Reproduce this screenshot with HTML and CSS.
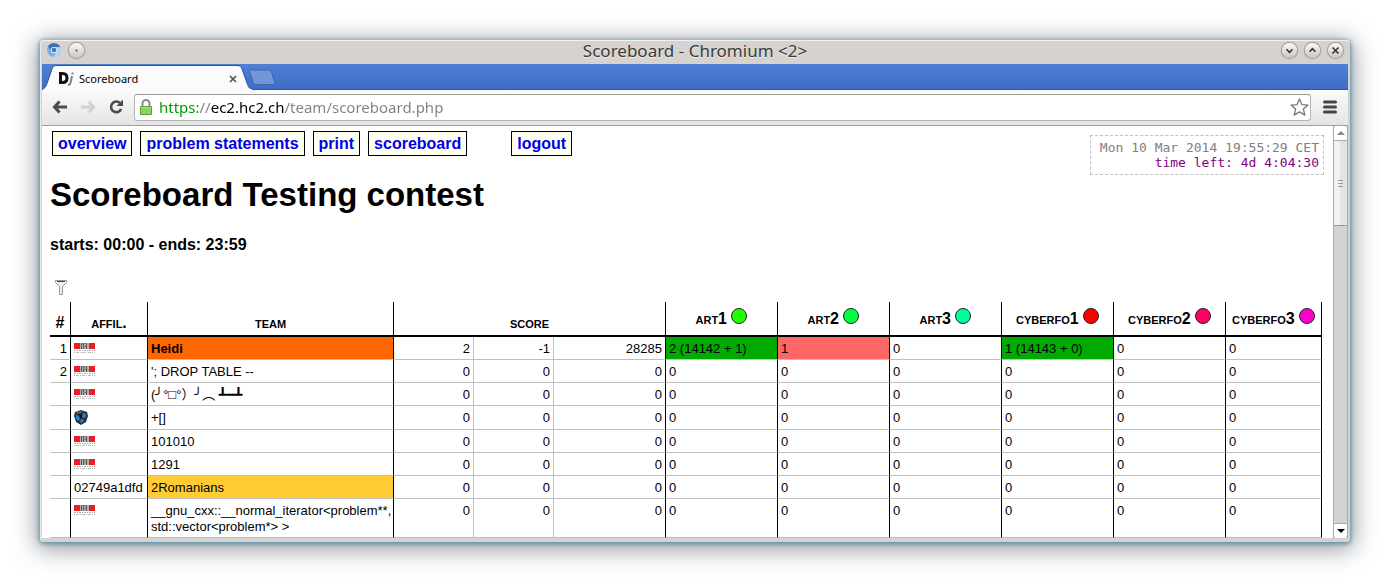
FILE: index.html
```html
<!DOCTYPE html>
<html lang="en">
<head>
<meta charset="utf-8">
<title>Scoreboard</title>
<link rel="stylesheet" href="styles.css">
</head>
<body>
<svg class="defs" width="0" height="0" aria-hidden="true">
  <symbol id="epfl" viewBox="0 0 21 11">
    <path fill="#ee1c25" d="M0 0h21v6H0z"/>
    <path fill="#b5aead" d="M6 0h9v6H6z"/>
    <path fill="none" stroke="#555" d="M7.500 0v6M9.500 0v6M12.500 1v5"/>
    <path fill="none" stroke="#777" d="M7 .5h6M9 3.500h3"/>
    <path fill="none" stroke="#aaa" stroke-dasharray="2 1 1 1" d="M0 7.500h21"/>
    <path fill="none" stroke="#bbb" stroke-dasharray="1 1 3 1" d="M0 9.500h21"/>
  </symbol>
  <symbol id="crest" viewBox="0 0 14 15">
    <path fill="#29323c" d="M1 2 7 0l6 2 1 4-2 6-5 3-5-3-2-6z"/>
    <path fill="#5c6c7a" d="M2 2.500 7 1l2 1-6 2z"/>
    <path fill="#2f7fc4" d="M2 5l3 1 1 3-2 2-2-2zM9 3l3 1-1 4-3-1zM7 9l3 1-2 3-2-1z"/>
    <path fill="#0b1016" d="M5 4l3 1v3L6 8z"/>
  </symbol>
</svg>
<div class="window">
  <header class="titlebar">
    <div class="controls start">
      <svg class="app-icon" width="14" height="14" viewBox="0 0 14 14"><circle cx="7" cy="7" r="7" fill="#7eaee0"/><path fill="#3f6faf" d="M1 3.500A7 7 0 0 1 13.200 4H7a3 3 0 0 0-3 3z"/><path fill="#b7d5f3" d="M13.400 4.200A7 7 0 0 1 6.500 14l3-5.200A3 3 0 0 0 9 4.200z"/><circle cx="7" cy="7" r="3.100" fill="#e8f1fa"/><circle cx="7" cy="7" r="2.300" fill="#3f78bd"/></svg>
      <button class="round" aria-label="Window menu"><svg width="15" height="15" viewBox="0 0 15 15"><circle cx="7.500" cy="7.500" r="1" fill="#444"/></svg></button>
    </div>
    <div class="title">Scoreboard - Chromium &lt;2&gt;</div>
    <div class="controls">
      <button class="round" aria-label="Minimize"><svg width="15" height="15" viewBox="0 0 15 15"><path d="M4.500 6.300l3 3 3-3"/></svg></button>
      <button class="round" aria-label="Maximize"><svg width="15" height="15" viewBox="0 0 15 15"><path d="M4.500 8.700l3-3 3 3"/></svg></button>
      <button class="round" aria-label="Close"><svg width="15" height="15" viewBox="0 0 15 15"><path d="M4.500 4.500l6 6M10.500 4.500l-6 6"/></svg></button>
    </div>
  </header>
  <div class="tabs">
    <div class="tab">
      <svg class="tab-shape" width="212" height="26" viewBox="0 0 212 26"><path fill="#fbfbfb" stroke="#2f529b" d="M0 25.500c3-1 4-3 5-6L10 5c1-3 2-3.500 5-3.500h180c3 0 4 1 5 3.500l5.500 15.500c1 3 2 4 5 5"/><path stroke="#fbfbfb" d="M1 25.500h209"/></svg>
      <svg class="favicon" width="17" height="16" viewBox="0 0 17 16"><path fill="none" stroke="#111" stroke-width="3" d="M2.500 2.500h2c3 0 4.500 1.500 4.500 4.500s-1.500 4.500-4.500 4.500h-2V2.500z"/><path fill="none" stroke="#6d8f8a" stroke-width="2" d="M14 5l-1.500 7c-.4 1.600-1.300 2-2.500 2M14.500 1.500v2"/></svg>
      <span class="tab-name">Scoreboard</span>
      <button class="tab-close" aria-label="Close tab"><svg width="8" height="8" viewBox="0 0 8 8"><path stroke="#555" stroke-width="1.700" d="M1 1l6 6M7 1L1 7"/></svg></button>
    </div>
    <button class="new-tab" aria-label="New tab"><svg width="28" height="17" viewBox="0 0 28 17"><path fill="#7396d8" stroke="#4365ae" d="M3 1h17c2 0 3 .5 3.500 2l3 10c.5 2 0 2.500-2 2.500H9c-2 0-3-.5-3.500-2L1.500 3C1 1.500 1.500 1 3 1z"/></svg></button>
  </div>
  <div class="toolbar">
    <button class="tool" aria-label="Back"><svg width="16" height="14" viewBox="0 0 16 14"><path fill="none" stroke="#4b4b4b" stroke-width="3" d="M7.500 1.500L2.500 7l5 5.500M3 7h12"/></svg></button>
    <button class="tool" aria-label="Forward"><svg width="16" height="14" viewBox="0 0 16 14"><path fill="none" stroke="#d2d2d2" stroke-width="3" d="M8.500 1.500l5 5.500-5 5.500M13 7H1"/></svg></button>
    <button class="tool reload" aria-label="Reload"><svg width="16" height="16" viewBox="0 0 16 16"><path fill="none" stroke="#4b4b4b" stroke-width="2.600" d="M12 4a5.300 5.300 0 1 0 1.200 6"/><path fill="#4b4b4b" d="M15 .5V7H8.500z"/></svg></button>
    <div class="omnibox">
      <svg width="12" height="16" viewBox="0 0 12 16"><path fill="none" stroke="#8b8b8b" stroke-width="2" d="M2.500 8V4.500a3.500 3.500 0 0 1 7 0V8"/><path fill="#8ed25f" stroke="#5c9a3a" d="M.5 7.500h11v8H.5z"/><path stroke="#b5e597" d="M1 8.500h10"/></svg>
      <input class="url" type="text" aria-label="Address" value="https://ec2.hc2.ch/team/scoreboard.php">
      <button class="star" aria-label="Bookmark"><svg width="19" height="18" viewBox="0 0 19 18"><path fill="#fff" stroke="#777" stroke-width="1.300" stroke-linejoin="round" d="M9.500 1l2.400 5.600 6.100.5-4.600 4 1.500 6-5.400-3.200-5.400 3.200 1.500-6-4.600-4 6.100-.5z"/></svg></button>
    </div>
    <button class="tool menu" aria-label="Menu"><svg width="14" height="14" viewBox="0 0 14 14"><path stroke="#454545" stroke-width="3" stroke-linecap="round" d="M1.500 2h11M1.500 7h11M1.500 12h11"/></svg></button>
  </div>
  <div class="viewport">
    <main class="page">
      <div class="top">
        <nav class="nav">
          <a href="#">overview</a>
          <a href="#">problem statements</a>
          <a href="#">print</a>
          <a href="#">scoreboard</a>
          <a href="#" class="logout">logout</a>
        </nav>
        <div class="clock">
          <div>Mon 10 Mar 2014 19:55:29 CET</div>
          <div class="left">time left: 4d 4:04:30</div>
        </div>
      </div>
      <h1>Scoreboard Testing contest</h1>
      <h4>starts: 00:00 - ends: 23:59</h4>
      <button class="filter" aria-label="Filter"><svg width="12" height="16" viewBox="0 0 12 16"><path fill="#eee" stroke="#999" d="M.5 1.500h11v2l-4 4v8h-3v-8l-4-4z"/><path stroke="#444" d="M2 2.500h8"/></svg></button>
      <table class="scoreboard">
        <colgroup><col class="c-rank"><col class="c-affil"><col><col class="c-num"><col class="c-num"><col class="c-prob"><col class="c-prob"><col class="c-prob"><col class="c-prob"><col class="c-prob"><col class="c-prob"><col class="c-last"></colgroup>
        <thead>
          <tr>
            <th>#</th><th>affil.</th><th>team</th><th colspan="3">score</th>
            <th class="prob">art1 <i class="ball lime"></i></th>
            <th class="prob">art2 <i class="ball green"></i></th>
            <th class="prob">art3 <i class="ball mint"></i></th>
            <th class="prob">cyberfo1 <i class="ball red"></i></th>
            <th class="prob">cyberfo2 <i class="ball rose"></i></th>
            <th class="prob">cyberfo3 <i class="ball magenta"></i></th>
          </tr>
        </thead>
        <tbody>
          <tr><td>1</td><td><svg class="logo"><use href="#epfl"/></svg></td><td class="self">Heidi</td><td>2</td><td>-1</td><td>28285</td><td class="ok">2 (14142 + 1)</td><td class="bad">1</td><td>0</td><td class="ok">1 (14143 + 0)</td><td>0</td><td>0</td></tr>
          <tr><td>2</td><td><svg class="logo"><use href="#epfl"/></svg></td><td>'; DROP TABLE --</td><td>0</td><td>0</td><td>0</td><td>0</td><td>0</td><td>0</td><td>0</td><td>0</td><td>0</td></tr>
          <tr><td></td><td><svg class="logo"><use href="#epfl"/></svg></td><td>(╯°□°）╯︵ ┻━┻</td><td>0</td><td>0</td><td>0</td><td>0</td><td>0</td><td>0</td><td>0</td><td>0</td><td>0</td></tr>
          <tr class="tall"><td></td><td><svg class="crest"><use href="#crest"/></svg></td><td>+[]</td><td>0</td><td>0</td><td>0</td><td>0</td><td>0</td><td>0</td><td>0</td><td>0</td><td>0</td></tr>
          <tr><td></td><td><svg class="logo"><use href="#epfl"/></svg></td><td>101010</td><td>0</td><td>0</td><td>0</td><td>0</td><td>0</td><td>0</td><td>0</td><td>0</td><td>0</td></tr>
          <tr><td></td><td><svg class="logo"><use href="#epfl"/></svg></td><td>1291</td><td>0</td><td>0</td><td>0</td><td>0</td><td>0</td><td>0</td><td>0</td><td>0</td><td>0</td></tr>
          <tr><td></td><td>02749a1dfd</td><td class="gold">2Romanians</td><td>0</td><td>0</td><td>0</td><td>0</td><td>0</td><td>0</td><td>0</td><td>0</td><td>0</td></tr>
          <tr><td></td><td><svg class="logo"><use href="#epfl"/></svg></td><td>__gnu_cxx::__normal_iterator&lt;problem**,<br>std::vector&lt;problem*&gt; &gt;</td><td>0</td><td>0</td><td>0</td><td>0</td><td>0</td><td>0</td><td>0</td><td>0</td><td>0</td></tr>
        </tbody>
      </table>
    </main>
    <div class="scrollbar">
      <button class="up" aria-label="Scroll up"><svg width="8" height="4" viewBox="0 0 8 4"><path fill="#888" d="M0 4l4-4 4 4z"/></svg></button>
      <div class="thumb"><span class="grip"></span></div>
      <button class="down" aria-label="Scroll down"><svg width="8" height="4" viewBox="0 0 8 4"><path fill="#000" d="M0 0h8L4 4z"/></svg></button>
    </div>
  </div>
</div>
</body>
</html>
```
FILE: styles.css
```css
* { box-sizing: border-box; }

body {
  margin: 0;
  padding: 40px;
  height: 100vh;
  background: #fff;
  font-family: "Liberation Sans", Arial, sans-serif;
  color: #000;
}

button {
  display: flex;
  align-items: center;
  justify-content: center;
  padding: 0;
  border: 0;
  background: none;
  flex: none;
}

svg { display: block; flex: none; }
.defs { position: absolute; }

.window {
  display: flex;
  flex-direction: column;
  height: 100%;
  padding: 0 2px 4px;
  background: #d6d2cf;
  border-radius: 4px;
  box-shadow: inset 0 1px 0 #f4f2f0, inset 1px 0 0 #eceae8, 0 1px 4px 1px #5b92aa, 0 4px 24px 3px rgba(60, 66, 80, 0.55);
}

/* Window frame */
.titlebar {
  display: flex;
  align-items: center;
  height: 24px;
  padding: 0 5px 3px;
  flex: none;
}

.title {
  flex: 1;
  text-align: center;
  font: 17px/20px "Noto Sans", sans-serif;
  color: #3b3937;
  text-shadow: 0 1px 0 #eee;
}

.controls { display: flex; gap: 8px; }
.controls.start { width: 61px; }

.round {
  width: 15px;
  height: 15px;
  border-radius: 50%;
  background: linear-gradient(#fbfbfa, #c9c5c1);
  box-shadow: 0 0 1px 1px #98938f;
}

.round path { fill: none; stroke: #333; stroke-width: 1.6; }

.tabs {
  display: flex;
  height: 26px;
  flex: none;
  background: linear-gradient(#4e80d5, #3f6cc6);
  box-shadow: inset 0 -1px 0 #2f529b;
}

.tab {
  position: relative;
  display: flex;
  align-items: center;
  width: 206px;
  padding: 3px 11px 0 16px;
}

.tab-shape {
  position: absolute;
  left: 0;
  top: 0;
  fill: none;
}

.favicon { position: relative; margin-right: 4px; }

.tab-name {
  position: relative;
  flex: 1;
  font: 11px/16px "Noto Sans", sans-serif;
}

.tab-close { position: relative; }
.new-tab { width: 28px; height: 26px; }

.toolbar {
  display: flex;
  align-items: center;
  height: 36px;
  flex: none;
  padding: 0 10px 1px;
  background: linear-gradient(#fbfbfb, #e4e4e4);
  border-bottom: 1px solid #a0a0a0;
}

.tool { width: 16px; margin-right: 12px; }
.tool.reload { margin-right: 10px; }
.tool.menu { margin: 0 0 0 11px; }

.omnibox {
  display: flex;
  align-items: center;
  flex: 1;
  height: 27px;
  padding: 0 1px 0 5px;
  background: #fff;
  border: 1px solid #b5b5b5;
  border-top-color: #9a9a9a;
  border-radius: 3px;
}

.url {
  flex: 1;
  min-width: 0;
  margin-left: 7px;
  padding: 0;
  border: 0;
  outline: 0;
  font: 15px/24px "Noto Sans", sans-serif;
  color: #808080;
  background: linear-gradient(90deg, #009500 39px, #808080 39px 52px, #000 52px 125px, #808080 125px);
  background-clip: text;
  -webkit-text-fill-color: transparent;
}

/* Web page */
.viewport {
  display: flex;
  flex: 1;
  min-height: 0;
  background: #fff;
}

.page {
  flex: 1;
  min-width: 0;
  overflow: hidden;
  padding: 0 11px 0 8px;
}

.top {
  display: flex;
  justify-content: space-between;
  align-items: flex-start;
  height: 50px;
  margin-right: -2px;
}

.nav {
  display: flex;
  gap: 8px;
  padding: 5px 0 0 2px;
}

.nav a {
  padding: 3px 5px 2px;
  border: 1px solid #000;
  background: #fffff0;
  color: #0000ee;
  font-weight: bold;
  font-size: 16px;
  line-height: 18px;
  text-decoration: none;
}

.nav .logout { margin-left: 36px; }

.clock {
  min-width: 234px;
  margin-top: 9px;
  padding: 4px;
  border: 1px dashed #c0c0c0;
  color: #808080;
  text-align: right;
  font: 13px/15px "DejaVu Sans Mono", monospace;
}

.left { color: #800080; }

h1 {
  margin: 0 0 23px;
  font-size: 33px;
  line-height: 37px;
}

h4 {
  margin: 0 0 24px;
  font-size: 16px;
  line-height: 18px;
}

.filter {
  height: 24px;
  margin-left: 5px;
  padding-bottom: 7px;
}

.scoreboard {
  width: 100%;
  table-layout: fixed;
  border-collapse: separate;
  border-spacing: 0;
}

.c-rank { width: 21px; }
.c-affil { width: 77px; }
.c-num { width: 80px; }
.c-prob { width: 112px; }
.c-last { width: 96px; }

th {
  height: 35px;
  padding: 0 0 3px;
  border-right: 1px solid #000;
  border-bottom: 2px solid #000;
  vertical-align: bottom;
  font-size: 16px;
  line-height: 18px;
  font-variant: small-caps;
  white-space: nowrap;
}

th.prob { padding-bottom: 7px; }

.ball {
  display: inline-block;
  width: 16px;
  height: 16px;
  border: 1px solid #222;
  border-radius: 50%;
}

.lime { background: #22ff00; }
.green { background: #00ff40; }
.mint { background: #00ff99; }
.red { background: #ff0000; }
.rose { background: #ff0066; }
.magenta { background: #ff00cc; }

td {
  padding: 4px 3px 2px;
  border-right: 1px solid #000;
  border-bottom: 1px solid #c0c0c0;
  vertical-align: top;
  font-family: "Liberation Sans", Arial, "DejaVu Sans Mono", "Noto Sans CJK JP", sans-serif;
  font-size: 13px;
  line-height: 16px;
  height: 23px;
  white-space: nowrap;
}

.tall td { height: 24px; }

td:first-child,
td:nth-child(n+4):nth-child(-n+6) { text-align: right; }

td:nth-child(4),
td:nth-child(5) { border-right-color: #c0c0c0; }

.logo { width: 21px; height: 11px; margin-top: 2px; }
.crest { width: 14px; height: 15px; }
.self { background: #ff6600; font-weight: bold; }
.gold { background: #ffcc33; }
.ok { background: #00aa00; }
.bad { background: #ff6666; }

.scrollbar {
  display: flex;
  flex-direction: column;
  width: 15px;
  flex: none;
  background: #d3d3d3;
  border: solid #aaa;
  border-width: 0 1px;
}

.up,
.down {
  height: 15px;
  background: #fff;
  border-bottom: 1px solid #aaa;
  border-radius: 3px 3px 0 0;
}

.down {
  margin-top: auto;
  border: 0;
  border-top: 1px solid #aaa;
  border-radius: 0 0 3px 3px;
}

.thumb {
  display: flex;
  align-items: center;
  justify-content: center;
  height: 85px;
  background: linear-gradient(90deg, #f2f2f2 50%, #e4e4e4 50%);
  border-bottom: 1px solid #999;
}

.grip {
  width: 5px;
  height: 7px;
  background: repeating-linear-gradient(#999 0 1px, transparent 1px 3px);
}
```
